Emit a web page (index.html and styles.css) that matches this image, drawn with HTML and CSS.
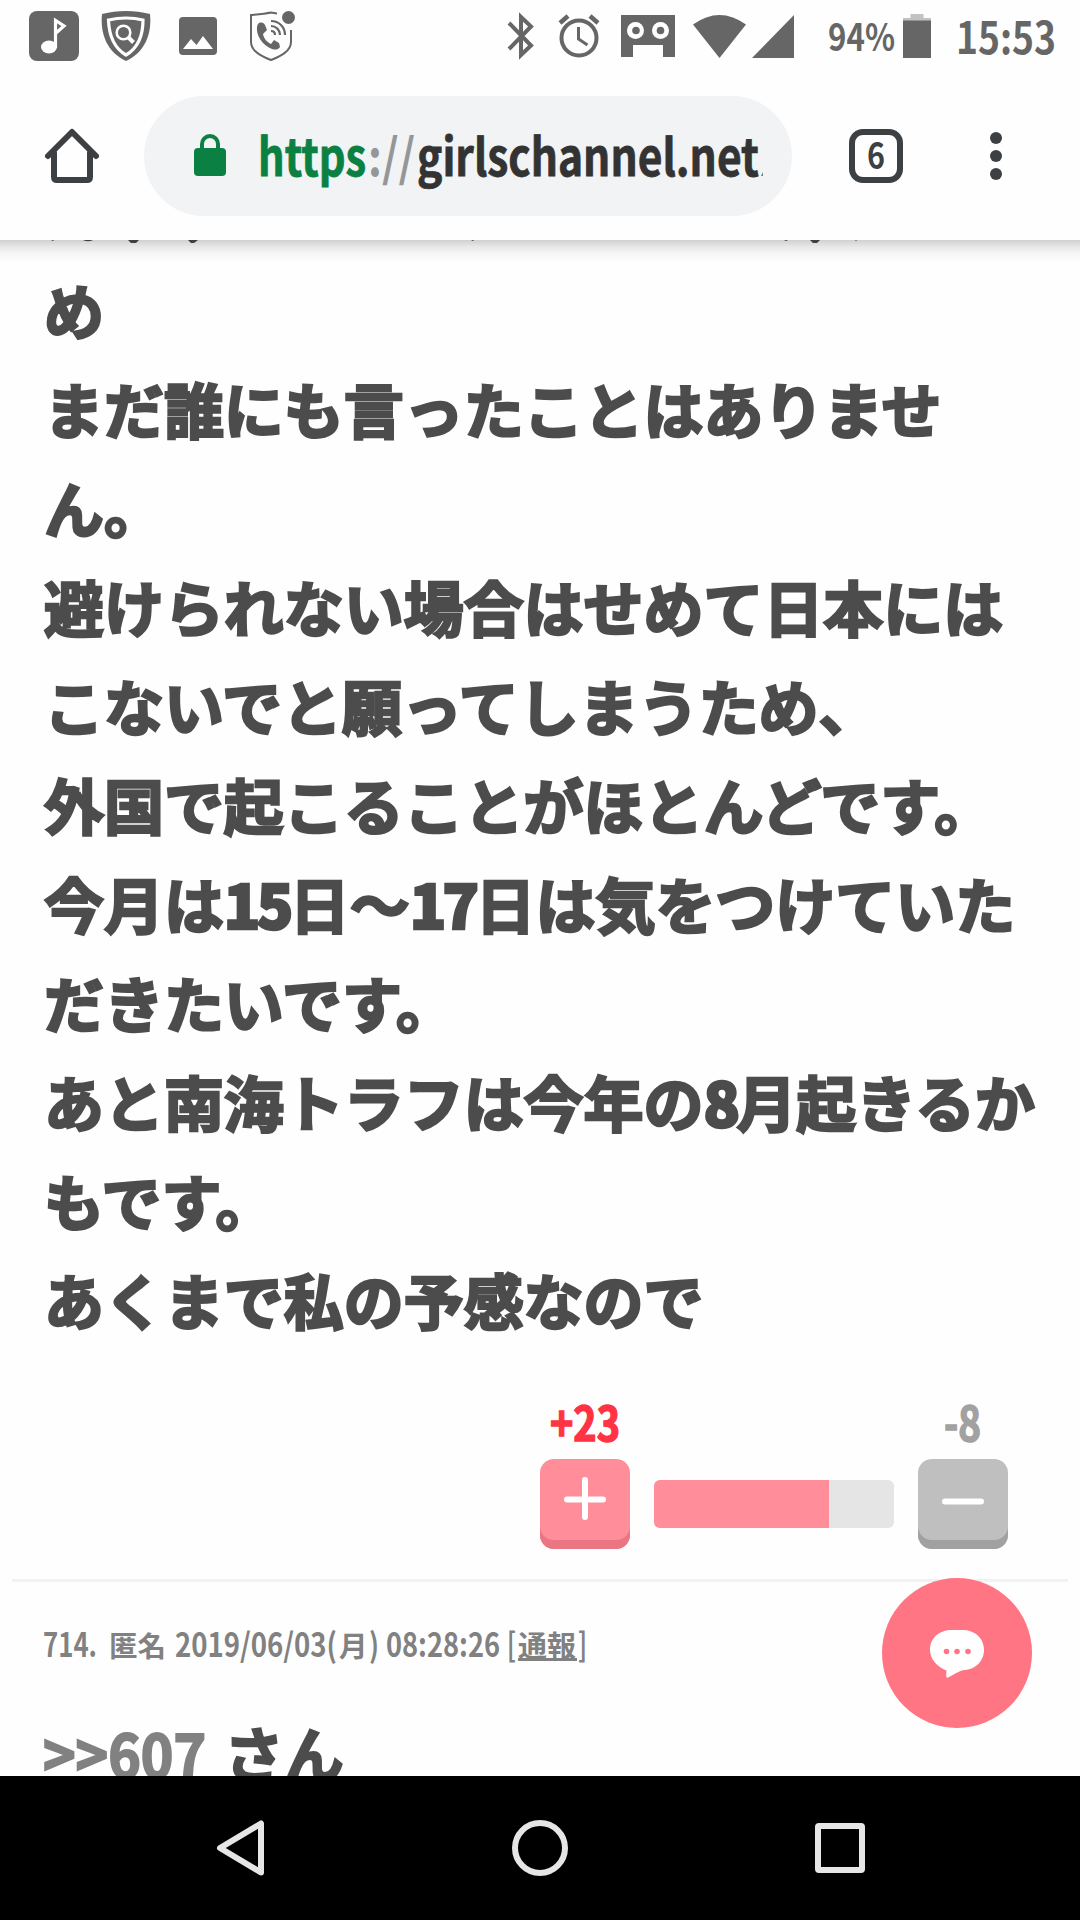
FILE: index.html
```html
<!DOCTYPE html>
<html lang="ja">
<head>
<meta charset="utf-8">
<title>girlschannel.net</title>
<link rel="stylesheet" href="styles.css">
</head>
<body>
<div class="phone">
  <header class="status">
    <div class="status-left">
      <svg class="ic-music" width="50" height="50" viewBox="0 0 50 50"><rect width="50" height="50" rx="8"/><ellipse cx="20" cy="36" rx="8" ry="6.5" fill="#fff"/><path d="M26.5 37V9.500L35 15l-8.500 7.500" fill="none" stroke="#fff" stroke-width="3.200"/></svg>
      <svg class="ic-shield" width="50" height="50" viewBox="0 0 50 50"><path d="M25 0c8 0 16 1 24 3 2 20-5 38-24 47C6 41-1 23 1 3 9 1 17 0 25 0z"/><path d="M25 7c6 0 12 .7 17 2 0 15-5 28-17 35C13 37 8 24 7.500 9 13 7.700 19 7 25 7z" fill="none" stroke="#fff" stroke-width="3.200"/><circle cx="22.500" cy="21.500" r="6.800" fill="none" stroke="#fff" stroke-width="2.600"/><path d="M27.500 26.500l5 5" stroke="#fff" stroke-width="4"/></svg>
      <svg class="ic-image" width="38" height="38" viewBox="0 0 38 38"><rect width="38" height="38" rx="4"/><path d="M4 32l8-10 5.500 6L24 19l10 13z" fill="#fff"/></svg>
      <svg class="ic-call" width="46" height="50" viewBox="0 0 46 50"><path d="M28 2.500L22 1.500C15 3 8 3.500 2 4v27c0 9 10 14 20 18 10-4 20-9 20-18V19" fill="none" stroke="#666" stroke-width="2"/><circle cx="39.500" cy="6.500" r="6.500"/><path d="M10 12c3-1 5 0 6 2l2 5-4 4c1 5 4 8 8 10l3-4 5 3 1 4c-2 3-5 3-8 2C13 34 7 24 8 16c0-2 1-3 2-4z"/><path d="M22 10c8 0 14 6 14 14M22 15c5 0 9 4 9 9M22 20c2.500 0 4 1.500 4 4" fill="none" stroke="#666" stroke-width="2.200"/></svg>
    </div>
    <div class="status-right">
      <svg class="ic-bt" width="27" height="44" viewBox="0 0 27 44"><path d="M2 9l22 22.500L14 41V3l10 9.500L2 35" fill="none" stroke="#666" stroke-width="4"/></svg>
      <svg class="ic-alarm" width="42" height="44" viewBox="0 0 42 44"><g fill="none" stroke="#666"><circle cx="21" cy="24" r="17.500" stroke-width="4"/><path d="M2 9l8-7M40 9l-8-7" stroke-width="4.500"/><path d="M20.500 13v12l9 6" stroke-width="3"/></g></svg>
      <svg class="ic-vm" width="54" height="42" viewBox="0 0 54 42"><path d="M0 0h54v42H42V30H12v12H0z"/><ellipse cx="14.500" cy="15.500" rx="8.500" ry="8.500" fill="#fff"/><ellipse cx="39.500" cy="15.500" rx="8.500" ry="8.500" fill="#fff"/><circle cx="15" cy="15.500" r="3.800"/><circle cx="39.500" cy="15.500" r="3.800"/></svg>
      <svg class="ic-wifi" width="53" height="43" viewBox="0 0 53 43"><path d="M0 9.500Q26.500-9.500 53 9.500L26.500 43z"/></svg>
      <svg class="ic-sig" width="42" height="43" viewBox="0 0 42 43"><path d="M42 0v43H0z"/></svg>
      <svg class="ic-pct" width="68" height="50" viewBox="0 0 68 50"><text x="0" y="39.500" font-size="38" textLength="67" lengthAdjust="spacingAndGlyphs">94%</text></svg>
      <svg class="ic-bat" width="28" height="44" viewBox="0 0 28 44"><path d="M7.500 0h13v4H28v3H0V4h7.500z" fill="#c2c2c2"/><path d="M0 6.500h28V44H0z"/></svg>
      <svg class="ic-time" width="100" height="50" viewBox="0 0 100 50"><text x="-3" y="42.500" font-size="44" textLength="100" lengthAdjust="spacingAndGlyphs">15:53</text></svg>
    </div>
  </header>

  <nav class="toolbar">
    <svg class="home" width="54" height="54" viewBox="0 0 54 54"><g fill="none" stroke="#3c4043" stroke-width="6" stroke-linecap="round" stroke-linejoin="round"><path d="M3 27L27 3l24 24"/><path d="M9 24v24q0 3 3 3h30q3 0 3-3V24"/></g></svg>
    <div class="omnibox">
      <svg class="lock" width="32" height="42" viewBox="0 0 32 42"><rect y="14" width="32" height="28" rx="4"/><path d="M8 15v-5a8 8 0 0 1 16 0v5" fill="none" stroke="#0b8043" stroke-width="4"/></svg>
      <svg class="url" width="506" height="70" viewBox="0 0 506 70"><text y="54.500" font-size="51" lengthAdjust="spacingAndGlyphs"><tspan x="-1" textLength="108" lengthAdjust="spacingAndGlyphs" class="u-scheme">https</tspan><tspan x="109" textLength="47" lengthAdjust="spacingAndGlyphs" class="u-sep">://</tspan><tspan x="158" textLength="342" lengthAdjust="spacingAndGlyphs" class="u-host">girlschannel.net</tspan></text><path d="M502 55l2-4v4z" fill="#777"/></svg>
    </div>
    <div class="tabs"><svg width="18" height="36" viewBox="0 0 18 36"><text x="0" y="31" font-size="36" textLength="18" lengthAdjust="spacingAndGlyphs">6</text></svg></div>
    <div class="menu"><i></i><i></i><i></i></div>
  </nav>

  <main class="page">
    <svg class="cut-line" width="1080" height="4" viewBox="0 0 1080 4"><path d="M51 0h3l-1 1zM83 0h10q-5 2.500-10 0zM128 0h11l-3 3h-5zM188 0h10l-4 3h-3zM471 0h3l-1 1zM784 0h4l-2 1zM810 0h10l-3 3h-4zM855 0h2l-1 1z"/></svg>
    <div class="toolbar-shadow"></div>
    <article class="comment">
      <p>め</p>
      <p>まだ誰にも言ったことはありませ</p>
      <p>ん。</p>
      <p>避けられない場合はせめて日本には</p>
      <p>こないでと願ってしまうため、</p>
      <p>外国で起こることがほとんどです。</p>
      <p>今月は<b>15</b>日〜<b>17</b>日は気をつけていた</p>
      <p>だきたいです。</p>
      <p>あと南海トラフは今年の<b>8</b>月起きるか</p>
      <p>もです。</p>
      <p>あくまで私の予感なので</p>
    </article>
    <section class="votes">
      <div class="vote">
        <svg width="90" height="50" viewBox="0 0 90 50"><text x="10" y="41" font-size="47" textLength="70" lengthAdjust="spacingAndGlyphs" fill="#ff3344" stroke="#ff3344">+23</text></svg>
        <div class="btn plus"><svg width="42" height="44" viewBox="0 0 42 44"><path d="M3 22.500h36M21 3v37" stroke="#fff" stroke-width="6" stroke-linecap="round"/></svg></div>
      </div>
      <div class="gauge"><div class="gauge-fill" style="width:175px"></div></div>
      <div class="vote">
        <svg width="90" height="50" viewBox="0 0 90 50"><text x="26" y="41" font-size="47" textLength="37" lengthAdjust="spacingAndGlyphs" fill="#a1a1a1" stroke="#a1a1a1">-8</text></svg>
        <div class="btn minus"><svg width="42" height="44" viewBox="0 0 42 44"><path d="M3 24.500h36" stroke="#fff" stroke-width="6" stroke-linecap="round"/></svg></div>
      </div>
    </section>
    <section class="next">
      <svg class="meta" width="560" height="50" viewBox="0 0 560 50"><text y="36.500" font-size="33"><tspan x="-1" textLength="54" lengthAdjust="spacingAndGlyphs">714.</tspan><tspan x="65" font-size="28.500">匿名</tspan><tspan x="131" textLength="162" lengthAdjust="spacingAndGlyphs">2019/06/03(</tspan><tspan x="295" font-size="28.500">月</tspan><tspan x="325" textLength="10" lengthAdjust="spacingAndGlyphs">)</tspan><tspan x="342" textLength="114" lengthAdjust="spacingAndGlyphs">08:28:26</tspan><tspan x="463" textLength="9" lengthAdjust="spacingAndGlyphs">[</tspan><tspan x="474" font-size="29">通報</tspan><tspan x="534" textLength="9" lengthAdjust="spacingAndGlyphs">]</tspan></text><path d="M474 38h59v3h-59z"/></svg>
      <svg class="reply" width="400" height="64" viewBox="0 0 400 64"><text y="60" font-size="60" stroke-width="2"><tspan x="-1" textLength="163" lengthAdjust="spacingAndGlyphs" fill="#818181" stroke="#818181">&gt;&gt;607</tspan><tspan x="180" fill="#4c4c4c" stroke="#4c4c4c">さん</tspan></text></svg>
    </section>
    <div class="fab"><svg width="54" height="48" viewBox="0 0 54 48"><path d="M22 0h10c13 0 22 8 22 20 0 11-9 20-20 20-5 1-9 4-16 7.500-2 .5-2-1-1.500-7C7 37 0 29 0 20 0 8 9 0 22 0z" fill="#fff"/><g fill="#ff7584"><circle cx="16.500" cy="21.500" r="2.800"/><circle cx="27" cy="21.500" r="2.800"/><circle cx="38" cy="21.500" r="2.800"/></g></svg></div>
  </main>

  <footer class="navbar">
    <svg class="nav-back" width="48" height="56" viewBox="0 0 48 56"><path d="M45 3.500v49L4 28z"/></svg>
    <svg class="nav-home" width="56" height="56" viewBox="0 0 56 56"><circle cx="28" cy="28" r="25"/></svg>
    <svg class="nav-recent" width="50" height="50" viewBox="0 0 50 50"><rect x="3" y="3" width="44" height="44" rx="1"/></svg>
  </footer>
</div>
</body>
</html>
```
FILE: styles.css
```css
* { box-sizing: border-box; margin: 0; padding: 0; }
body { width: 1080px; height: 1920px; overflow: hidden; background: #fefefe; font-family: "Noto Sans CJK JP", sans-serif; font-weight: 700; }
svg { display: block; flex: none; overflow: visible; }
.phone { width: 1080px; height: 1920px; display: flex; flex-direction: column; }

.status { height: 72px; display: flex; justify-content: space-between; fill: #666; }
.status-left { display: flex; align-items: center; padding-left: 29px; }
.ic-shield { margin-left: 22px; }
.ic-image { margin-left: 28px; }
.ic-call { margin-left: 32px; }
.status-right { display: flex; align-items: center; width: 573px; }
.ic-alarm { margin-left: 24px; }
.ic-vm { margin-left: 21px; }
.ic-wifi { margin-left: 18px; }
.ic-sig { margin-left: 6px; }
.ic-pct { margin-left: 34px; }
.ic-bat { margin-left: 7px; }
.ic-time { margin-left: 28px; }

.toolbar { height: 168px; padding: 24px 0 0 45px; display: flex; align-items: flex-start; }
.home { margin-top: 33px; }
.omnibox { width: 648px; height: 120px; margin-left: 45px; padding-left: 50px; border-radius: 60px; background: #f1f3f4; display: flex; align-items: center; }
.lock { fill: #0b8043; margin-top: -2px; }
.url { margin-left: 33px; }
.u-scheme { fill: #0b8043; stroke: #0b8043; stroke-width: .8px; }
.u-sep { fill: #949698; }
.u-host { fill: #333; stroke: #333; stroke-width: .8px; }
.tabs { width: 54px; height: 54px; margin: 33px 0 0 57px; border: 6px solid #3c4043; border-radius: 14px; display: flex; align-items: center; justify-content: center; fill: #3c4043; }
.menu { margin: 36px 0 0 87px; display: flex; flex-direction: column; gap: 6px; }
.menu i { width: 12px; height: 12px; border-radius: 50%; background: #3c4043; }

.page { position: relative; height: 1536px; overflow: hidden; }
.cut-line { position: absolute; top: 0; left: 0; fill: #4c4c4c; }
.toolbar-shadow { position: absolute; top: 0; left: 0; width: 1080px; height: 22px; background: linear-gradient(rgba(0,0,0,.18), rgba(0,0,0,.09) 30%, rgba(0,0,0,.035) 60%, rgba(0,0,0,0)); }
.comment { padding: 19px 0 0 44px; color: #4c4c4c; font-size: 60px; line-height: 99px; white-space: nowrap; -webkit-text-stroke: 2.500px #4c4c4c; }
.comment p { height: 99px; letter-spacing: -.05px; }
.comment b { letter-spacing: -3.600px; }

.votes { height: 206px; margin-top: 25px; padding-left: 540px; display: flex; gap: 24px; }
.vote { width: 90px; padding-top: 27px; stroke-width: 1.500px; }
.btn { width: 90px; height: 90px; margin-top: 9px; border-radius: 14px; display: flex; justify-content: center; padding-top: 18px; }
.plus { background: #ff8e9a; box-shadow: inset 0 -9px #ea7684; }
.minus { background: #bfbfbf; box-shadow: inset 0 -9px #a1a1a1; }
.gauge { width: 240px; height: 48px; margin-top: 107px; border-radius: 6px; background: #e5e5e5; overflow: hidden; }
.gauge-fill { height: 48px; background: #ff8e9a; }

.next { margin: 0 12px; border-top: 3px solid #f2f2f2; padding: 38px 0 0 32px; }
.meta { fill: #818181; }
.reply { margin-top: 48px; }
.fab { position: absolute; left: 882px; top: 1338px; width: 150px; height: 150px; border-radius: 50%; background: #ff7584; display: flex; justify-content: center; padding-top: 52px; }

.navbar { height: 144px; background: #000; display: flex; align-items: center; padding: 0 215px 0 216px; fill: none; stroke: #e6e6e6; stroke-width: 6; stroke-linejoin: round; }
.nav-home { margin-left: 248px; }
.nav-recent { margin-left: 247px; }
```
